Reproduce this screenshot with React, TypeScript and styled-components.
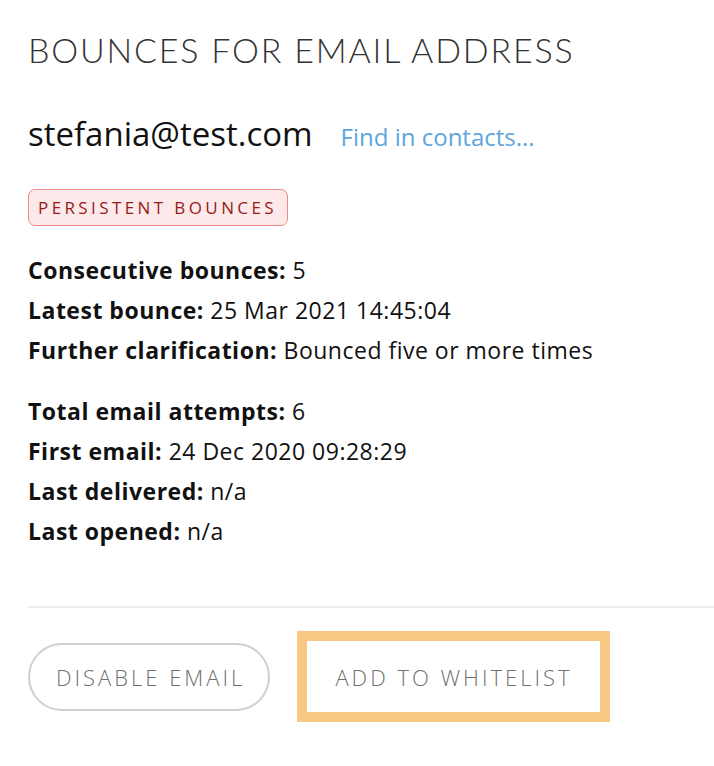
import React from "react";
import styled, { createGlobalStyle } from "styled-components";

const GlobalStyle = createGlobalStyle`
  body {
    margin: 0;
    background: #fff;
    font-family: "Open Sans", Lato, sans-serif;
    color: #151515;
  }
`;

const Page = styled.div`
  padding: 30px 0 40px 28px;
`;

const Title = styled.h1`
  margin: 0;
  font-family: Lato, "Open Sans", sans-serif;
  font-size: 34px;
  font-weight: 300;
  letter-spacing: 1.8px;
  line-height: 40px;
  color: #333;
  text-transform: uppercase;
`;

const EmailRow = styled.div`
  display: flex;
  align-items: baseline;
  gap: 28px;
  margin-top: 44px;
  line-height: 40px;
`;

const Email = styled.span`
  font-size: 33px;
  color: #111;
`;

const FindLink = styled.a`
  font-size: 24px;
  color: #5da6dd;
  text-decoration: none;
  cursor: pointer;
`;

const Badge = styled.div`
  display: inline-block;
  margin-top: 32px;
  padding: 0 10px 0 9px;
  height: 35px;
  line-height: 35px;
  border: 1px solid #ef8a84;
  border-radius: 7px;
  background: #fde9e9;
  color: #961c1a;
  font-size: 17px;
  letter-spacing: 3.4px;
  text-transform: uppercase;
`;

const Group = styled.div<{ $gap?: number }>`
  margin-top: ${(p) => p.$gap ?? 0}px;
`;

const Row = styled.div`
  font-size: 23px;
  letter-spacing: 0.5px;
  line-height: 40px;
  color: #111;
  b {
    font-weight: 700;
  }
`;

const Divider = styled.hr`
  margin: 55px 0 0 0;
  border: none;
  height: 2px;
  background: #ececec;
`;

const buttonText = `
  font-family: "Open Sans", Lato, sans-serif;
  font-size: 22px;
  font-weight: 300;
  letter-spacing: 3px;
  text-transform: uppercase;
  color: #6f6f6f;
  background: #fff;
  cursor: pointer;
`;

const Actions = styled.div`
  display: flex;
  align-items: center;
  gap: 37px;
  margin-top: 33px;
`;

const PillButton = styled.button`
  ${buttonText}
  height: 68px;
  padding: 0 23px 0 26px;
  border: 2px solid #cfcfcf;
  border-radius: 34px;
`;

const FlatButton = styled.button`
  ${buttonText}
  height: 71px;
  padding: 0 27px 0 28px;
  border: none;
  outline: 10px solid #f7c784;
`;

const details = [
  { label: "Consecutive bounces:", value: "5" },
  { label: "Latest bounce:", value: "25 Mar 2021 14:45:04" },
  { label: "Further clarification:", value: "Bounced five or more times" },
];

const history = [
  { label: "Total email attempts:", value: "6" },
  { label: "First email:", value: "24 Dec 2020 09:28:29" },
  { label: "Last delivered:", value: "n/a" },
  { label: "Last opened:", value: "n/a" },
];

const App = () => {
  return (
    <>
      <GlobalStyle />
      <Page>
        <Title>Bounces for email address</Title>
        <EmailRow>
          <Email>stefania@test.com</Email>
          <FindLink>Find in contacts...</FindLink>
        </EmailRow>
        <Badge>Persistent bounces</Badge>
        <Group $gap={24}>
          {details.map((d) => (
            <Row key={d.label}>
              <b>{d.label}</b> {d.value}
            </Row>
          ))}
        </Group>
        <Group $gap={21}>
          {history.map((d) => (
            <Row key={d.label}>
              <b>{d.label}</b> {d.value}
            </Row>
          ))}
        </Group>
        <Divider />
        <Actions>
          <PillButton>Disable email</PillButton>
          <FlatButton>Add to whitelist</FlatButton>
        </Actions>
      </Page>
    </>
  );
};

export default App;
